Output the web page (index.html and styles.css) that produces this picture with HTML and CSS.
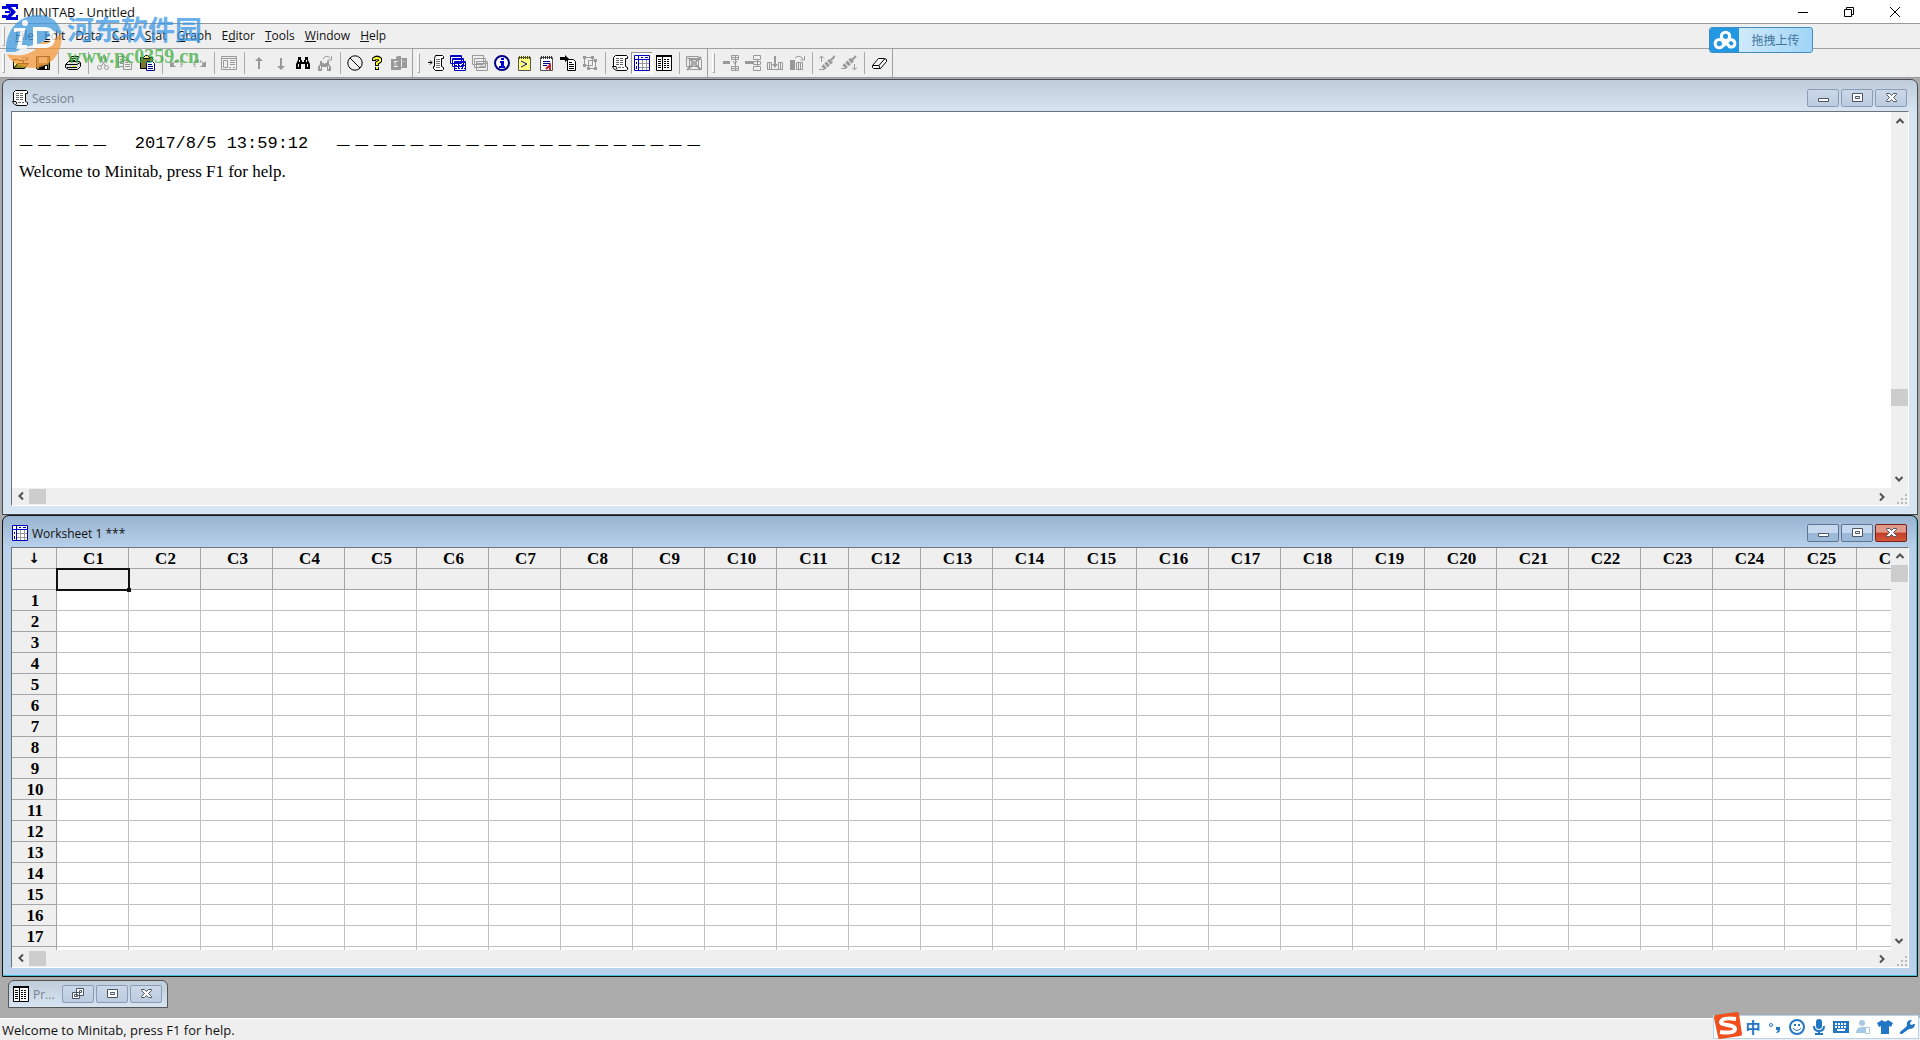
FILE: index.html
```html
<!DOCTYPE html>
<html lang="en">
<head>
<meta charset="utf-8">
<title>MINITAB - Untitled</title>
<link rel="stylesheet" href="styles.css">
</head>
<body>
<svg class="defs" aria-hidden="true">
  <symbol id="logo" viewBox="0 0 16 16"><path fill="#0000d8" d="M4 0h12v5h-2V3H9l5 5-5 5h5v-2h2v5H4v-3l5-5-5-5zM0 2h5v3H0zM3 7h5v2H3zM0 11h5v3H0z"/></symbol>
  <symbol id="open" viewBox="0 0 16 16"><path fill="#ffff9c" stroke="#000" d="M.5 13.5v-9h4l1 1h5v3"/><path fill="#8a8a20" stroke="#000" d="M.5 13.5l4-5h11l-4 5z"/><path fill="none" stroke="#555" d="M9 3.500q3-3 5 1M14.500 2v3h-3"/></symbol>
  <symbol id="save" viewBox="0 0 16 16"><path fill="#7a7a35" stroke="#000" d="M1.500 1.500h13v13h-12l-1-1z"/><path fill="#eee" d="M4 2h8v6H4z"/><path d="M4 10h9v5H4z"/><path fill="#fff" d="M10 11h2v3h-2z"/></symbol>
  <symbol id="print" viewBox="0 0 16 16"><path fill="#fff" stroke="#000" d="M4.500 6.500l2-5h7l-2 5zM6 3.500h5M5 5.500h5"/><path fill="#ddd" stroke="#000" d="M.5 9.500l3-3h11l1 1v4l-3 3h-9l-3-2z"/><path fill="none" stroke="#000" d="M1 9.500h11l3-2M2 12.500h10"/><path fill="#dd0" d="M8 11h3v1H8z"/></symbol>
  <symbol id="cut" viewBox="0 0 16 16"><g fill="none" stroke="#999"><path d="M6.500 1v4l4 6M10.500 1v4l-4 6"/><circle cx="4.500" cy="12.500" r="2"/><circle cx="11.500" cy="12.500" r="2"/></g></symbol>
  <symbol id="copy" viewBox="0 0 16 16"><g fill="#eee" stroke="#999"><path d="M1.500 1.500h6l2 2v8h-8zM3 4.500h3M3 6.500h4M3 8.500h4"/><path d="M6.500 5.500h6l2 2v7h-8zM8 9.500h5M8 11.500h5M8 7.500h3"/></g></symbol>
  <symbol id="paste" viewBox="0 0 16 16"><path fill="#777730" stroke="#000" d="M1.500 2.500h12v11h-12z"/><path fill="#ee8" stroke="#000" d="M4.500 3.500v-1l2-2h2l2 2v1z"/><path fill="#fff" stroke="#008" d="M7.500 6.500h6l2 2v7h-8zM9 9.500h4M9 11.500h5M9 13.500h5"/></symbol>
  <symbol id="undo" viewBox="0 0 16 16"><path fill="none" stroke="#999" stroke-width="2" stroke-dasharray="2 1" d="M3 9q6-6 10-1l-1 4"/><path fill="#999" d="M1 6v6h6z"/></symbol>
  <symbol id="redo" viewBox="0 0 16 16"><path fill="none" stroke="#999" stroke-width="2" stroke-dasharray="2 1" d="M13 9q-6-6-10-1l1 4"/><path fill="#999" d="M15 6v6H9z"/></symbol>
  <symbol id="dialog" viewBox="0 0 16 16"><path fill="none" stroke="#999" d="M.5 1.500h15v13H.5zM1 3.500h14M2.500 5.500h4v7h-4zM9 5.500h5M9 7.500h5M9 9.500h5M8 12.500h2M12 12.500h2"/></symbol>
  <symbol id="up" viewBox="0 0 16 16"><path fill="#999" d="M8 2l4 4H9v8H7V6H4z"/></symbol>
  <symbol id="down" viewBox="0 0 16 16"><path fill="#999" d="M8 15l-4-4h3V3h2v8h3z"/></symbol>
  <symbol id="find" viewBox="0 0 16 16"><path d="M3 2h3v3h1v2h2V5h1V2h3v3l2 4v5h-5V9H6v5H1V9l2-4z"/><path fill="#eee" d="M3 9h1v3H3zM12 9h1v3h-1zM4 5h1v2H4zM11 5h1v2h-1z"/></symbol>
  <symbol id="findnext" viewBox="0 0 16 16"><path fill="#999" d="M3 6h2v2h2v1h1V8h2V6h2v3l2 3v4h-4v-4H5v4H1v-4l2-3z"/><path fill="#eee" d="M3 11h1v3H3zM11 11h1v3h-1z"/><path fill="none" stroke="#999" d="M6 4q3-5 7-1M14.500 1v4h-4"/></symbol>
  <symbol id="cancel" viewBox="0 0 16 16"><g fill="none" stroke="#000"><circle cx="8" cy="8" r="7.200"/><path d="M3 3l10 10"/></g></symbol>
  <symbol id="help" viewBox="0 0 16 16"><path fill="none" stroke="#000" stroke-width="4" d="M5 6V4q3-3 6 0v2L8 8v3M8 12v3"/><path fill="none" stroke="#ff3" stroke-width="2" d="M5 5V4q3-2 6 0v2L8 8v2M8 12v2"/></symbol>
  <symbol id="guide" viewBox="0 0 16 16"><path fill="#999" d="M5 2l2-1h3v2h6v10h-6v2H0V4h5z"/><path fill="none" stroke="#eee" d="M10.500 4v8M7 6.500H3l2 3-2 2h4M13 6v1"/></symbol>
  <symbol id="scroll" viewBox="0 0 16 16"><path fill="#fff" stroke="#000" d="M3.500.5h11l1 1v2h-2v8l2 1v2l-1 1h-10l-3-2-1-2h1v-9z"/><path fill="none" stroke="#000" d="M1 11.500h3l1 3"/><path stroke="#666" stroke-dasharray="3 1" d="M4 3.500h7M4 5.500h7M4 7.500h7M4 9.500h7M6 12.500h6"/></symbol>
  <symbol id="toscroll" viewBox="0 0 16 16"><path fill="#fff" stroke="#000" d="M7.500.5h7l1 1v2h-2v8l2 1v2l-1 1h-7l-2-2v-2h1v-8z"/><path stroke="#777" d="M8 4.500h4M8 6.500h4M8 8.500h4M8 10.500h4M8 12.500h4"/><path stroke="#000" d="M0 7.500h4M2 5.500l2 2-2 2" fill="none"/></symbol>
  <symbol id="sheets" viewBox="0 0 16 16"><g fill="#fff" stroke="#0000c8"><path d="M.5.5h11v8H.5zM2.500 3.500h11v8h-11zM4.500 6.500h11v9h-11z"/><path d="M0 1.500h12M2 4.500h12M4 7.500h12"/><path stroke-dasharray="2 1" d="M8.500 9v6M12.500 9v6M5 10.500h10M5 13.500h10"/></g></symbol>
  <symbol id="graphs" viewBox="0 0 16 16"><g fill="#eee" stroke="#999"><path d="M.5.5h11v9H.5zM2.500 3.500h11v9h-11zM4.500 6.500h11v9h-11zM5 8.500h10M6 13l3-2 2 1 3-2"/></g></symbol>
  <symbol id="info" viewBox="0 0 16 16"><circle cx="8" cy="8" r="7" fill="#fff" stroke="#000080" stroke-width="2"/><path fill="#00d" d="M7 3h3v2H7zM6 6h4v5h1v2H5v-2h2V8H6z"/></symbol>
  <symbol id="history" viewBox="0 0 16 16"><path fill="#ffff80" stroke="#555" d="M2.500 2.500h12v13h-12z"/><path stroke="#550" stroke-width="3" stroke-dasharray="1 1" d="M3 2.500h12"/><path fill="none" stroke="#008" d="M5 6l6 3-6 3"/></symbol>
  <symbol id="report" viewBox="0 0 16 16"><path fill="#fff" stroke="#555" d="M2.500 2.500h12v13h-12z"/><path stroke="#333" stroke-width="3" stroke-dasharray="1 1" d="M3 2.500h12"/><path stroke="#008" d="M5 6.500h7M5 8.500h7M5 10.500h4"/><path fill="none" stroke="#d02030" stroke-width="2" d="M8 14l4-4v5"/></symbol>
  <symbol id="todoc" viewBox="0 0 16 16"><path fill="#fff" stroke="#000" d="M7.500 4.500h6l2 2v9h-8zM9 7.500h3M9 9.500h5M9 11.500h5M9 13.500h5"/><path d="M0 2h5V0l4 4-4 3V5H0z"/></symbol>
  <symbol id="related" viewBox="0 0 16 16"><path fill="none" stroke="#999" d="M2.500 2.500h8v8h-8zM6.500 5.500h7v8h-7z"/><path fill="#999" d="M1 1h3v3H1zM9 1h3v3H9zM1 9h3v3H1zM12 4h3v3h-3zM5 12h3v3H5zM12 12h3v3h-3z"/></symbol>
  <symbol id="sheet" viewBox="0 0 16 16"><path fill="#fff" d="M0 0h16v16H0z"/><path fill="none" stroke="#999" d="M8.500 4v12M12.500 4v12M4 8.500h12M4 12.500h12"/><path fill="none" stroke="#0000c0" d="M.5.5h15v15H.5zM4.500 1v14M1 4.500h14M7 2.500h2M11 2.500h3M2.500 7v2M2.500 11v3"/></symbol>
  <symbol id="project" viewBox="0 0 16 16"><path fill="#fff" stroke="#000" d="M.5.500h15v15H.5zM6.500 2v13"/><path stroke="#000" stroke-width="2" d="M0 1h16"/><path stroke="#000" d="M2 4.500h3M2 6.500h3M2 8.500h3M2 10.500h3M2 12.500h3"/><path stroke="#000" stroke-dasharray="2 1" d="M8 4.500h6M8 6.500h6M8 8.500h6M8 10.500h6M8 12.500h6"/></symbol>
  <symbol id="closeall" viewBox="0 0 16 16"><path fill="none" stroke="#999" d="M.5 1.500h12v10H.5zM3.500 4.500h12v10h-12zM1 3.500h11"/><path stroke="#999" stroke-width="2" d="M1 15L15 2M3 3l12 12"/><path fill="#aaa" d="M5 6h6v4H5z"/></symbol>
  <symbol id="insrow" viewBox="0 0 16 16"><path fill="#999" d="M0 6h7v3H0z"/><path fill="none" stroke="#999" d="M8.500.5h7v4h-7zM8.500 11.500h7v4h-7zM12.500 0v16M8 13.500h8M8 2.500h8M10 6l2 3 2-3"/></symbol>
  <symbol id="inscell" viewBox="0 0 16 16"><path fill="#999" d="M0 6h8v3H0z"/><path fill="none" stroke="#999" d="M8.500.5h7v4h-7zM8.500 11.500h7v4h-7zM8.500 6.500h7v3h-7zM12.500 4v7"/></symbol>
  <symbol id="inscol" viewBox="0 0 16 16"><path fill="#999" d="M7 1h2v8h2l-3 4-3-4h2z"/><path fill="none" stroke="#999" d="M.5 7.500h4v7h-4zM11.500 7.500h4v7h-4zM2.500 7v8M13.500 7v8M0 14.500h16"/></symbol>
  <symbol id="movecol" viewBox="0 0 16 16"><path fill="#999" d="M1 5h5v10H1z"/><path fill="none" stroke="#999" d="M7.500 7.500h6v7h-6zM9.500 7v8M11.500 7v8M6 3q4-4 8 1M15.500 1v4h-4"/></symbol>
  <symbol id="brushup" viewBox="0 0 16 16"><path stroke="#999" stroke-width="5" stroke-dasharray="3 1" d="M4 13l9-8"/><path fill="none" stroke="#999" d="M2.500 7V1M0 3.500l2.500-2.500L5 3.500M0 14.500h5"/><path stroke="#999" stroke-width="2" d="M12 5l4-4"/></symbol>
  <symbol id="brushdown" viewBox="0 0 16 16"><path stroke="#999" stroke-width="5" stroke-dasharray="3 1" d="M3 12l9-8"/><path fill="none" stroke="#999" d="M13.500 9v6M11 12.500l2.500 2.500 2.500-2.500M0 13.500h5"/><path stroke="#999" stroke-width="2" d="M11 5l4-4"/></symbol>
  <symbol id="erase" viewBox="0 0 16 16"><path fill="#fff" stroke="#000" d="M1.500 10.500l6-7h6l2 1v2l-6 7h-7l-1-1zM2 10.500h6l6-7M8 10.500l1 3"/></symbol>
  <symbol id="w-min" viewBox="0 0 16 16"><path fill="#fff" stroke="#4a5568" d="M3.500 8.500h10v3h-10z"/></symbol>
  <symbol id="w-max" viewBox="0 0 16 16"><path fill="#fff" stroke="#4a5568" d="M3.500 3.500h10v8h-10zM6.500 6.500h4v2h-4z"/></symbol>
  <symbol id="w-rest" viewBox="0 0 16 16"><path fill="#fff" stroke="#4a5568" d="M6.500 2.500h7v7h-7zM9.500 4.500h2v2h-2zM2.500 6.500h7v6h-7zM4.500 8.500h3v2h-3z"/></symbol>
  <symbol id="w-close" viewBox="0 0 16 16"><path fill="#fff" stroke="#4a5568" d="M3.500 3.500h3l2 2 2-2h3v1l-3 3 3 3v1h-3l-2-2-2 2h-3v-1l3-3-3-3z"/></symbol>
  <symbol id="chev" viewBox="0 0 16 16"><path fill="none" stroke="#505050" stroke-width="2" d="M4.500 10L8 6.500l3.500 3.500"/></symbol>
</svg>

<header class="titlebar">
  <svg class="icon"><use href="#logo"/></svg>
  <h1>MINITAB - Untitled</h1>
  <div class="caption">
    <button aria-label="Minimize"><svg viewBox="0 0 12 12"><path d="M1 6.500h10"/></svg></button>
    <button aria-label="Restore"><svg viewBox="0 0 12 12"><path d="M1.500 3.500h7v7h-7zM3.500 3V1.500h7v7H9"/></svg></button>
    <button aria-label="Close"><svg viewBox="0 0 12 12"><path d="M1 1l10 10M11 1L1 11"/></svg></button>
  </div>
</header>

<nav class="menubar">
  <i class="grip"></i>
  <button><u>F</u>ile</button><button><u>E</u>dit</button><button>D<u>a</u>ta</button><button><u>C</u>alc</button><button><u>S</u>tat</button><button><u>G</u>raph</button><button>E<u>d</u>itor</button><button><u>T</u>ools</button><button><u>W</u>indow</button><button><u>H</u>elp</button>
</nav>

<div class="toolbars">
  <div class="toolbar">
    <i class="grip"></i>
    <button aria-label="Open"><svg class="icon"><use href="#open"/></svg></button>
    <button aria-label="Save"><svg class="icon"><use href="#save"/></svg></button>
    <i class="sep"></i>
    <button aria-label="Print"><svg class="icon"><use href="#print"/></svg></button>
    <i class="sep"></i>
    <button aria-label="Cut"><svg class="icon"><use href="#cut"/></svg></button>
    <button aria-label="Copy"><svg class="icon"><use href="#copy"/></svg></button>
    <button aria-label="Paste"><svg class="icon"><use href="#paste"/></svg></button>
    <i class="sep"></i>
    <button aria-label="Undo"><svg class="icon"><use href="#undo"/></svg></button>
    <button aria-label="Redo"><svg class="icon"><use href="#redo"/></svg></button>
    <i class="sep"></i>
    <button aria-label="Edit last dialog"><svg class="icon"><use href="#dialog"/></svg></button>
    <i class="sep"></i>
    <button aria-label="Previous command"><svg class="icon"><use href="#up"/></svg></button>
    <button aria-label="Next command"><svg class="icon"><use href="#down"/></svg></button>
    <button aria-label="Find"><svg class="icon"><use href="#find"/></svg></button>
    <button aria-label="Find next"><svg class="icon"><use href="#findnext"/></svg></button>
    <i class="sep"></i>
    <button aria-label="Cancel"><svg class="icon"><use href="#cancel"/></svg></button>
    <button aria-label="Help"><svg class="icon"><use href="#help"/></svg></button>
    <button aria-label="StatGuide"><svg class="icon"><use href="#guide"/></svg></button>
  </div>
  <div class="toolbar">
    <i class="grip"></i>
    <button aria-label="Show session folder"><svg class="icon"><use href="#toscroll"/></svg></button>
    <button aria-label="Show worksheets folder"><svg class="icon"><use href="#sheets"/></svg></button>
    <button aria-label="Show graphs folder"><svg class="icon"><use href="#graphs"/></svg></button>
    <button aria-label="Show info"><svg class="icon"><use href="#info"/></svg></button>
    <button aria-label="Show history"><svg class="icon"><use href="#history"/></svg></button>
    <button aria-label="Show report pad"><svg class="icon"><use href="#report"/></svg></button>
    <button aria-label="Show related documents"><svg class="icon"><use href="#todoc"/></svg></button>
    <button aria-label="Show design"><svg class="icon"><use href="#related"/></svg></button>
    <i class="sep"></i>
    <button aria-label="Session window"><svg class="icon"><use href="#scroll"/></svg></button>
    <button class="pressed" aria-label="Current data window"><svg class="icon"><use href="#sheet"/></svg></button>
    <button aria-label="Project manager"><svg class="icon"><use href="#project"/></svg></button>
    <i class="sep"></i>
    <button aria-label="Close all graphs"><svg class="icon"><use href="#closeall"/></svg></button>
  </div>
  <div class="toolbar">
    <i class="grip"></i>
    <button aria-label="Insert cells"><svg class="icon"><use href="#insrow"/></svg></button>
    <button aria-label="Insert rows"><svg class="icon"><use href="#inscell"/></svg></button>
    <button aria-label="Insert columns"><svg class="icon"><use href="#inscol"/></svg></button>
    <button aria-label="Move columns"><svg class="icon"><use href="#movecol"/></svg></button>
    <i class="sep"></i>
    <button aria-label="Previous brushed row"><svg class="icon"><use href="#brushup"/></svg></button>
    <button aria-label="Next brushed row"><svg class="icon"><use href="#brushdown"/></svg></button>
    <i class="sep"></i>
    <button aria-label="Clear cells"><svg class="icon"><use href="#erase"/></svg></button>
  </div>
</div>

<main class="desktop">
  <section class="window session">
    <header class="wtitle">
      <svg class="icon"><use href="#scroll"/></svg><h2>Session</h2>
      <div class="wbuttons">
        <button aria-label="Minimize"><svg class="icon"><use href="#w-min"/></svg></button>
        <button aria-label="Maximize"><svg class="icon"><use href="#w-max"/></svg></button>
        <button aria-label="Close"><svg class="icon"><use href="#w-close"/></svg></button>
      </div>
    </header>
    <div class="client">
      <div class="view output">
        <p class="stamp"><span class="dashes">— — — — —</span><time>2017/8/5 13:59:12</time><span class="dashes">— — — — — — — — — — — — — — — — — — — —</span></p>
        <p class="welcome">Welcome to Minitab, press F1 for help.</p>
      </div>
      <div class="vbar"><button aria-label="Scroll up"><svg class="icon"><use href="#chev"/></svg></button><i class="space-before"></i><i class="thumb"></i><i class="space-after"></i><button class="to-down" aria-label="Scroll down"><svg class="icon"><use href="#chev"/></svg></button></div>
      <div class="hbar"><button class="to-left" aria-label="Scroll left"><svg class="icon"><use href="#chev"/></svg></button><i class="thumb"></i><i class="space-after"></i><button class="to-right" aria-label="Scroll right"><svg class="icon"><use href="#chev"/></svg></button></div>
      <svg class="resize" viewBox="0 0 12 12"><path d="M9 1h2v2H9zM5 5h2v2H5zM9 5h2v2H9zM1 9h2v2H1zM5 9h2v2H5zM9 9h2v2H9z"/></svg>
    </div>
  </section>

  <section class="window worksheet active">
    <header class="wtitle">
      <svg class="icon"><use href="#sheet"/></svg><h2>Worksheet 1 ***</h2>
      <div class="wbuttons">
        <button aria-label="Minimize"><svg class="icon"><use href="#w-min"/></svg></button>
        <button aria-label="Maximize"><svg class="icon"><use href="#w-max"/></svg></button>
        <button class="close" aria-label="Close"><svg class="icon"><use href="#w-close"/></svg></button>
      </div>
    </header>
    <div class="client">
      <div class="view"><table class="grid" id="grid"></table></div>
      <div class="vbar"><button aria-label="Scroll up"><svg class="icon"><use href="#chev"/></svg></button><i class="thumb"></i><i class="space-after"></i><button class="to-down" aria-label="Scroll down"><svg class="icon"><use href="#chev"/></svg></button></div>
      <div class="hbar"><button class="to-left" aria-label="Scroll left"><svg class="icon"><use href="#chev"/></svg></button><i class="thumb"></i><i class="space-after"></i><button class="to-right" aria-label="Scroll right"><svg class="icon"><use href="#chev"/></svg></button></div>
      <svg class="resize" viewBox="0 0 12 12"><path d="M9 1h2v2H9zM5 5h2v2H5zM9 5h2v2H9zM1 9h2v2H1zM5 9h2v2H5zM9 9h2v2H9z"/></svg>
    </div>
  </section>

  <section class="minimized">
    <svg class="icon"><use href="#project"/></svg><h2>Pr...</h2>
    <div class="wbuttons">
      <button aria-label="Restore"><svg class="icon"><use href="#w-rest"/></svg></button>
      <button aria-label="Maximize"><svg class="icon"><use href="#w-max"/></svg></button>
      <button aria-label="Close"><svg class="icon"><use href="#w-close"/></svg></button>
    </div>
  </section>
</main>

<footer class="status">Welcome to Minitab, press F1 for help.</footer>

<div class="watermark">
  <svg viewBox="0 0 58 56"><path fill="#3f9ae0" d="M1 38C0 16 14 1 33 1c14 0 22 8 24 20l-8-4-12 12-17 4L10 38z"/><path fill="#f59a3c" d="M2 40c12 3 24 1 31-7l3-5c8 1 15-2 20-9 3 18-9 35-28 35C16 54 6 49 2 40z"/><path fill="none" stroke="#fff" stroke-width="4" d="M9 16h9L14 33h8M30 13v21M30 15h9q9 0 9 9 0 7-7 8h-9"/><circle cx="20" cy="9" r="3" fill="#fff"/></svg>
  <div><strong>河东软件园</strong><em>www.pc0359.cn</em></div>
</div>

<button class="upload"><svg viewBox="0 0 28 24"><g fill="none" stroke="#fff" stroke-width="3"><circle cx="15" cy="8" r="4"/><circle cx="9" cy="15" r="4"/><path d="M13 11l6 7q5 1 5-3t-5-4l-6 6"/></g></svg><span>拖拽上传</span></button>

<div class="ime">
  <svg class="sogou" viewBox="0 0 28 28"><path fill="#f0501e" d="M1 4L23 1q2 0 2 2l3 20q0 2-2 2L6 28q-2 0-2-2L0 7Q0 5 1 4z"/><path fill="none" stroke="#fff" stroke-width="4" d="M22 8q-14-2-15 3c0 4 14 2 14 7 0 4-9 4-15 3"/></svg>
  <button>中</button>
  <button aria-label="Punctuation"><svg viewBox="0 0 16 16"><circle cx="4" cy="6" r="1.500" fill="none" stroke="#2277c4"/><path d="M9 8h4v3q0 3-4 3l2-3H9z"/></svg></button>
  <button aria-label="Emoji"><svg viewBox="0 0 16 16"><circle cx="8" cy="8" r="7" fill="none" stroke="#2277c4" stroke-width="2"/><path d="M5 5h2v2H5zM9 5h2v2H9z"/><path fill="none" stroke="#2277c4" d="M4 9q4 5 8 0"/></svg></button>
  <button aria-label="Voice"><svg viewBox="0 0 16 16"><rect x="5" y="0" width="6" height="10" rx="3"/><path fill="none" stroke="#2277c4" stroke-width="2" d="M3 7q0 5 5 5t5-5M8 12v3M4 15h8"/></svg></button>
  <button aria-label="Keyboard"><svg viewBox="0 0 16 16"><path d="M0 2h16v12H0z"/><path stroke="#fff" stroke-dasharray="2 1" stroke-width="2" d="M2 5h12M2 8h12"/><path stroke="#fff" stroke-width="2" d="M4 11h8"/></svg></button>
  <button aria-label="Account"><svg viewBox="0 0 16 16" opacity=".4"><circle cx="7" cy="4" r="3"/><path d="M1 14q0-6 6-6h3v6z"/><path fill="none" stroke="#2277c4" d="M10.500 8.500h4v6h-4z"/></svg></button>
  <button aria-label="Skin"><svg viewBox="0 0 16 16"><path d="M5 1q3 3 6 0l5 3-2 4-2-1v8H4V7L2 8 0 4z"/></svg></button>
  <button aria-label="Tools"><svg viewBox="0 0 16 16"><path d="M1 13l7-6q-1-5 3-6l2 0-2 3 1 2 3-1 1 0q0 5-6 5l-7 5q-3 0-2-2z"/></svg></button>
</div>
<script src="grid.js"></script>
</body>
</html>
```
FILE: grid.js
```js
const COLUMNS = 26;
const ROWS = 18;

function addRow(section, label, makeCell) {
  const row = section.insertRow();
  const head = document.createElement('th');
  head.textContent = label;
  row.append(head);
  for (let c = 1; c <= COLUMNS; c++) row.append(makeCell(c));
}

const grid = document.getElementById('grid');
const head = grid.createTHead();
addRow(head, '↓', c => {
  const th = document.createElement('th');
  th.textContent = 'C' + c;
  return th;
});
addRow(head, '', c => {
  const td = document.createElement('td');
  if (c === 1) td.className = 'selected';
  return td;
});
const body = grid.createTBody();
for (let r = 1; r <= ROWS; r++) addRow(body, r, () => document.createElement('td'));
```
FILE: styles.css
```css
* { box-sizing: border-box; }
body {
  margin: 0;
  height: 100vh;
  display: flex;
  flex-direction: column;
  overflow: hidden;
  background: #efefef;
  color: #111;
  font: 12px/16px "Open Sans", "Noto Sans", "Noto Sans CJK SC", sans-serif;
}
button { border: 0; padding: 0; background: none; font: inherit; color: inherit; }
h1, h2, p { margin: 0; font-size: 12px; font-weight: 400; }
.defs { display: none; }
.icon { display: block; width: 16px; height: 16px; flex: none; }

.titlebar { display: flex; align-items: center; gap: 5px; height: 23px; padding-left: 2px; background: #fff; }
.titlebar h1 { font-size: 13px; }
.caption { margin-left: auto; display: flex; padding-right: 2px; }
.caption button { width: 46px; height: 20px; display: grid; place-items: center; }
.caption svg { width: 12px; height: 12px; fill: none; stroke: #000; }

.menubar { display: flex; align-items: center; height: 26px; padding-left: 2px; border-top: 1px solid #999; border-bottom: 1px solid #a0a0a0; }
.menubar button { padding: 0 5px; }
.grip { width: 3px; height: 20px; margin-right: 5px; border: 1px solid #aaa; border-color: #fff #aaa #aaa #fff; }

.toolbars { display: flex; height: 29px; border-bottom: 1px solid #999; }
.toolbar { display: flex; align-items: center; padding: 0 2px; border-right: 1px solid #a0a0a0; }
.toolbar:not(:first-child) { padding-left: 4px; }
.toolbar button { width: 22px; height: 22px; display: grid; place-items: center; }
.toolbar .pressed { border: 1px solid; border-color: #999 #fff #fff #999; background: #f7f7f7; }
.sep { width: 1px; height: 22px; margin: 0 3px 0 4px; background: #aaa; }

.desktop { flex: 1; min-height: 0; display: flex; flex-direction: column; padding: 1px 2px 10px; background: #ababab; }
.window { min-height: 0; display: flex; flex-direction: column; padding: 0 8px 8px; border: 1px solid #444b55; border-radius: 7px 7px 0 0; }
.session { flex: 436; background: linear-gradient(#bfcddb, #d7e4f2 32px); }
.worksheet { flex: 463; background: linear-gradient(#99b4d1, #b9d1ea 32px); box-shadow: inset 0 -1px #3fc0d8, inset -1px 0 #3fc0d8; border-color: #111; }
.wtitle { display: flex; align-items: center; gap: 4px; height: 31px; flex: none; padding: 4px 2px 0 1px; }
.wtitle h2, .minimized h2 { padding-top: 2px; }
.session h2, .minimized h2 { color: #75818e; }
.wbuttons { display: flex; gap: 2px; margin-left: auto; }
.wbuttons button { width: 32px; height: 18px; display: grid; place-items: center; border: 1px solid #8a9cb8; border-radius: 2px; background: linear-gradient(#cbd8e8, #bccbdf); }
.active .wbuttons button { border-color: #5d7594; background: linear-gradient(#c5d8ed 50%, #9db9d8 50%); }
.active .wbuttons .close { border-color: #7a2018; background: linear-gradient(#e09a8a 45%, #c43d24 50%, #d4583c); }

.client { flex: 1; min-height: 0; display: grid; grid-template: minmax(0, 1fr) 17px / minmax(0, 1fr) 17px; border: 1px solid #6b737c; border-right-color: #fff; border-bottom-color: #fff; background: #efefef; }
.view { overflow: hidden; background: #fff; }
.vbar { display: flex; flex-direction: column; }
.hbar { display: flex; }
.vbar button, .hbar button { width: 17px; height: 17px; display: grid; place-items: center; }
.thumb { width: 17px; height: 17px; background: #cdcdcd; }
.hbar .thumb { height: 15px; align-self: center; }
.space-before { flex: 4; }
.space-after { flex: 1; }
.to-down { transform: rotate(180deg); }
.to-left { transform: rotate(-90deg); }
.to-right { transform: rotate(90deg); }
.resize { width: 12px; height: 12px; place-self: end; fill: #bbb; }

.output { padding: 20px 7px; color: #000; }
.stamp { display: flex; align-items: center; gap: 28px; height: 24px; white-space: nowrap; font-size: 14px; }
.stamp time { font: 17px/24px "Liberation Mono", monospace; }
.dashes { font-family: "DejaVu Sans", sans-serif; }
.welcome { margin-top: 6px; font: 17px/20px "Liberation Serif", serif; }

.grid { width: 1917px; table-layout: fixed; border-spacing: 0; color: #000; font: bold 17px/18px "Liberation Serif", serif; }
.grid th, .grid td { height: 21px; padding: 2px 0 0 2px; border-right: 1px solid #c0c0c0; border-bottom: 1px solid #c0c0c0; text-align: center; }
.grid th:first-child { width: 45px; }
.grid th, .grid thead td { background: #efefef; border-color: #a5a5a5; }
.grid thead th:first-child { padding: 0; font: bold 14px/18px "DejaVu Sans", sans-serif; }
.grid .selected { position: relative; outline: 2px solid #111; outline-offset: -1px; }
.selected::after { content: ""; position: absolute; right: -3px; bottom: -3px; width: 4px; height: 4px; background: #111; }

.minimized { display: flex; align-items: center; gap: 4px; width: 160px; height: 28px; flex: none; margin: 3px 0 0 6px; padding: 0 5px 0 4px; border: 1px solid #555; border-radius: 6px 6px 0 0; background: linear-gradient(#bfcddb, #d7e4f2); }

.status { height: 22px; flex: none; padding: 3px 2px; border-top: 1px solid #fff; font-size: 13px; }

.watermark { position: absolute; left: 5px; top: 14px; display: flex; gap: 4px; opacity: .75; pointer-events: none; }
.watermark svg { width: 58px; height: 56px; }
.watermark strong { display: block; font: 700 27px/30px "Noto Sans CJK SC", sans-serif; color: #3a97e6; }
.watermark em { display: block; font: bold 20px/24px "Liberation Serif", serif; color: #3fae3f; }

.upload { position: absolute; right: 107px; top: 27px; display: flex; align-items: center; width: 104px; height: 26px; overflow: hidden; border: 1px solid #3f8fc4; border-radius: 3px; background: linear-gradient(100deg, #e3f3fd, #9fd4f5); color: #41739b; }
.upload svg { width: 29px; height: 25px; background: #2497e3; }
.upload span { flex: 1; padding-top: 2px; text-align: center; }

.ime { position: absolute; right: 1px; bottom: 1px; display: flex; align-items: center; height: 24px; background: #fff; border: 1px solid #b8d4ec; }
.ime button { width: 22px; height: 22px; display: grid; place-items: center; color: #2277c4; font: 700 15px/20px "Noto Sans CJK SC", sans-serif; }
.ime button svg { width: 16px; height: 16px; fill: #2277c4; }
.sogou { width: 28px; height: 28px; margin-bottom: 4px; }
```
